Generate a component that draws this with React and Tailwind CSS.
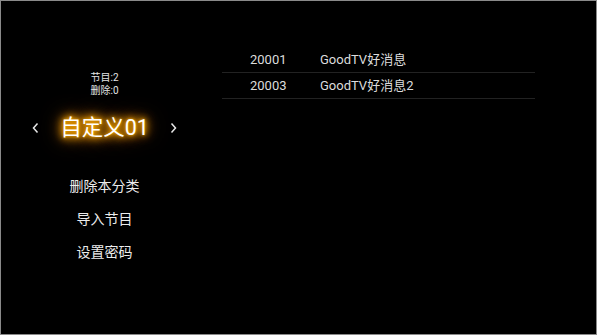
import { memo } from 'react';

const channels = [
  { id: '20001', name: 'GoodTV好消息' },
  { id: '20003', name: 'GoodTV好消息2' },
];

const menu = ['删除本分类', '导入节目', '设置密码'];

const Arrow = ({ dir }) => (
  <svg width="7" height="12" viewBox="0 0 7 12" className="shrink-0">
    <polyline
      points={dir === 'left' ? '5.5,1.5 1.5,6 5.5,10.5' : '1.5,1.5 5.5,6 1.5,10.5'}
      fill="none"
      stroke="#e8e8e8"
      strokeWidth="1.5"
    />
  </svg>
);

const App = memo(() => {
  return (
    <div className="w-[599px] h-[336px] bg-white font-['Roboto','Noto_Sans_CJK_SC',sans-serif]">
      <div className="w-[597px] h-[335px] bg-black border border-[#8a8a8a] flex">
        <div className="w-[207px] flex flex-col items-center pt-[70px] text-[#e4e4e4]">
          <p className="text-[10px] leading-[13px]">节目:2</p>
          <p className="text-[10px] leading-[13px]">删除:0</p>

          <div className="mt-[15px] h-[32px] flex items-center gap-[21px]">
            <Arrow dir="left" />
            <span className="text-[21.5px] leading-none text-white [text-shadow:0_0_3px_#ffb000,0_0_6px_#f5a000,0_0_8px_#f5a000,0_0_12px_#ec9400,0_0_16px_#d88400,0_0_22px_#b06a00]">
              自定义01
            </span>
            <Arrow dir="right" />
          </div>

          <div className="mt-[26px] flex flex-col items-center">
            {menu.map((item) => (
              <div key={item} className="h-[33px] flex items-center text-[14px] text-[#ececec]">
                {item}
              </div>
            ))}
          </div>
        </div>

        <div className="ml-[14px] w-[313px] pt-[46px]">
          {channels.map((ch) => (
            <div
              key={ch.id}
              className="h-[26px] flex items-center border-b border-[#222] text-[13px] text-[#dcdcdc]"
            >
              <span className="w-[70px] pl-[28px] box-content shrink-0">{ch.id}</span>
              <span>{ch.name}</span>
            </div>
          ))}
        </div>
      </div>
    </div>
  );
});

export default App;
